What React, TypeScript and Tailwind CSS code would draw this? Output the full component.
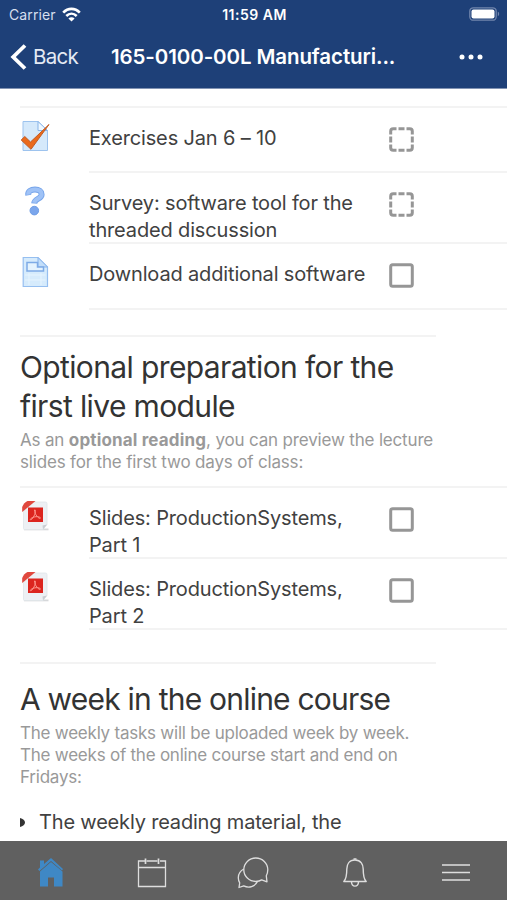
import type { ReactNode } from 'react';

function CheckedPageIcon() {
    return (
        <svg width="30" height="32" viewBox="0 0 30 32" fill="none">
            <path d="M3 1.5H18L27.5 11V30.5H3Z" fill="#d5e9fb" stroke="#9dc3ee" />
            <path d="M18 1.5V10.5H27.5Z" fill="#eff8ff" stroke="#86b3e8" />
            <path d="M1.2 20L4.8 16.5L10.5 22L29 4.5L11 29.3Z" fill="#ea6a1c" stroke="#c05c25" strokeWidth="1" strokeLinejoin="round" />
        </svg>
    );
}

function QuestionIcon() {
    return (
        <svg width="30" height="32" viewBox="0 0 30 32" fill="none">
            <path d="M8.3 10.2C7.6 6.2 11 4.5 15 4.5C19.2 4.5 21.6 6.4 21.6 9.4C21.6 14 14.6 13.4 14.2 18.4" stroke="#76a4ea" strokeWidth="6" />
            <path d="M8.4 9.6C7.9 6.2 11 4.5 15 4.5C19.2 4.5 21.6 6.4 21.6 9.4C21.6 14 14.6 13.4 14.2 17.8" stroke="#9fc2f6" strokeWidth="4.2" />
            <circle cx="14.3" cy="25.6" r="4.3" fill="#7ba6ec" stroke="#6f9de6" />
        </svg>
    );
}

function PageIcon() {
    return (
        <svg width="30" height="32" viewBox="0 0 30 32" fill="none">
            <path d="M3.2 1.5H18L27.5 11V30.5H3.2Z" fill="#d6ebfc" stroke="#96bff0" strokeWidth="1.2" />
            <path d="M5 19H25.5M5 24H25.5M9 17V29M21 17V29" stroke="#e6f4fe" />
            <path d="M18 1.5V11H27.5Z" fill="#c2defa" stroke="#8ab5ec" />
            <path d="M7 6.5H17.5V11H23.5V15H7Z" fill="#e4f3fe" stroke="#7dabe6" strokeWidth="1.5" />
        </svg>
    );
}

function PdfIcon() {
    return (
        <svg width="30" height="32" viewBox="0 0 30 32" fill="none">
            <path d="M4 28.5H28.5V30.3H4Z" fill="#d6d8da" />
            <path d="M13 2H25.5Q27 2 27 3.5V24.5L23 29.5H4.5Q3.5 29.5 3.5 28.5V11Z" fill="#edf0f4" stroke="#e0e4e9" strokeWidth=".8" />
            <path d="M27 24.5L22.5 25.5L23 29.5Z" fill="#c9cdd2" />
            <path d="M7.5 1H15.5L2.2 12V7Q4 2.5 7.5 1Z" fill="#e0483e" />
            <rect x="8" y="7.5" width="15" height="14.5" fill="#dc251f" />
            <path d="M14.5 10C16.2 9 15.5 13.5 14 16C12.5 19 10.5 20.5 10.3 19.5C10.2 18.5 13 17 16 16.7C19 16.5 21 17.5 20.3 18.3C19 19.2 14.5 14.5 14.5 10Z" stroke="#ff9f95" strokeWidth=".9" />
        </svg>
    );
}

function Checkbox({ dashed = false }: { dashed?: boolean }) {
    return (
        <svg width="25" height="25" viewBox="0 0 25 25" fill="none" stroke="#969696" strokeWidth="3">
            {dashed ? (
                <>
                    <path d="M1.7 7.5V4.2Q1.7 1.7 4.2 1.7H7.5M17.5 1.7H20.8Q23.3 1.7 23.3 4.2V7.5M23.3 17.5V20.8Q23.3 23.3 20.8 23.3H17.5M7.5 23.3H4.2Q1.7 23.3 1.7 20.8V17.5" />
                    <path d="M9.5 1.7H15.5M9.5 23.3H15.5M1.7 9.5V15.5M23.3 9.5V15.5" />
                </>
            ) : (
                <rect x="1.7" y="1.7" width="21.6" height="21.6" rx="2" />
            )}
        </svg>
    );
}

type RowProps = {
    icon: ReactNode;
    height: string;
    dashed?: boolean;
    children: ReactNode;
};

function Row({ icon, height, dashed, children }: RowProps) {
    return (
        <div className={`flex pl-[20px] ${height}`}>
            <div className="w-[69px] shrink-0 pt-[12px]">{icon}</div>
            <div className="flex grow border-b-2 border-[#f3f3f3]">
                <div className="w-[300px] shrink-0 whitespace-nowrap pt-[17px] text-[20px] leading-[27px] tracking-[-0.15px] text-[#414141]">
                    {children}
                </div>
                <div className="pt-[19px]">
                    <Checkbox dashed={dashed} />
                </div>
            </div>
        </div>
    );
}

function StatusBar() {
    return (
        <div className="grid h-[28px] grid-cols-3 items-center pl-[9px] pr-[7px]">
            <div className="flex items-center gap-[6px]">
                <span className="text-[14px] tracking-[0.1px] text-[#d6dfef]">Carrier</span>
                <svg width="19" height="15" viewBox="0 0 19 15" fill="none" stroke="#fff" strokeWidth="2.6">
                    <path d="M1.2 5.6C6 .6 13 .6 17.8 5.6" />
                    <path d="M4.3 9C7.4 6 11.6 6 14.7 9" />
                    <path d="M9.5 14.5L6.4 11.4C8.2 9.8 10.8 9.8 12.6 11.4Z" fill="#fff" stroke="none" />
                </svg>
            </div>
            <span className="whitespace-nowrap text-center text-[14px] font-semibold tracking-[0.5px]">11:59 AM</span>
            <svg className="justify-self-end" width="31" height="14" viewBox="0 0 31 14" fill="none">
                <rect x=".8" y=".8" width="26.4" height="12.4" rx="3.5" stroke="#7185ac" strokeWidth="1.3" />
                <rect x="2.5" y="2.5" width="23" height="9" rx="2" fill="#fff" />
                <path d="M28.8 4.8C30.6 5.4 30.6 8.6 28.8 9.2Z" fill="#7185ac" />
            </svg>
        </div>
    );
}

function TabBar() {
    return (
        <nav className="grid h-[59px] shrink-0 grid-cols-5 items-center justify-items-center bg-[#606060] pt-[4px]">
            <svg width="28" height="32" viewBox="0 0 28 32" fill="none">
                <path d="M3 3.5H7V7L14 1L26 12L25 13.5L14 4L2.5 14L1 12.5L3 10.5Z" fill="#3f88c5" />
                <path d="M3 14.5L14 5L25.5 14.5V29.5H17V20.5H11V29.5H3Z" fill="#3f88c5" />
            </svg>
            <svg width="30" height="32" viewBox="0 0 30 32" fill="none" stroke="#dedede" strokeWidth="1.3">
                <path d="M8 4H1.5V29.5H28.5V4H23M9.5 4H20.5M1.5 10.5H28.5" />
                <path d="M8.5 1.5V7M21.5 1.5V7" strokeWidth="1.7" />
            </svg>
            <svg width="32" height="32" viewBox="0 0 32 32" fill="none" stroke="#dedede" strokeWidth="1.3" strokeLinejoin="round">
                <path d="M29.3 18.8C30.2 17 30.8 15 30.8 12.8C30.8 6.3 25.4 1 18.8 1S6.8 6.3 6.8 12.8S12.2 24.5 18.8 24.5C21 24.5 23 24 24.7 22.9L30 24.8Z" />
                <path d="M6.8 12C3.5 13.7 1.3 17 1.3 20.8C1.3 22.6 1.8 24.3 2.7 25.8L2 30.5L6.7 28.8C12 31.5 18 29.5 20.5 24.4" />
            </svg>
            <svg width="26" height="32" viewBox="0 0 26 32" fill="none" stroke="#dedede" strokeWidth="1.4">
                <path d="M13 3C7 3 4.8 7.5 4.8 12C4.8 19 4.3 22 1.8 24.5H24.2C21.7 22 21.2 19 21.2 12C21.2 7.5 19 3 13 3Z" strokeLinejoin="round" />
                <path d="M9.5 25C9.8 30.5 16.2 30.5 16.5 25M11.5 2H14.5" />
            </svg>
            <svg width="28" height="32" viewBox="0 0 28 32" fill="none" stroke="#dedede" strokeWidth="1.5">
                <path d="M0 8H28M0 15.5H28M0 23H28" />
            </svg>
        </nav>
    );
}

export default function App() {
    return (
        <div className="flex h-[900px] w-[507px] flex-col overflow-hidden bg-white font-[Inter,'Liberation_Sans',sans-serif]">
            <header className="h-[89px] shrink-0 border-b border-[#8293b3] bg-[#1e4078] text-white">
                <StatusBar />
                <div className="flex h-[58px] items-center pl-[10px] pr-[24px]">
                    <svg width="17" height="26" viewBox="0 0 17 26" fill="none" stroke="#fff" strokeWidth="3.8">
                        <path d="M15 1.5L3.2 13L15 24.5" />
                    </svg>
                    <span className="ml-[6px] w-[78px] text-[20.5px] tracking-[-0.7px] text-[#e4eaf4]">Back</span>
                    <h1 className="grow whitespace-nowrap text-[20.5px] font-semibold tracking-[-0.1px]">165-0100-00L Manufacturi...</h1>
                    <svg width="24" height="6" viewBox="0 0 24 6" fill="#fff">
                        <circle cx="3" cy="3" r="2.5" />
                        <circle cx="12" cy="3" r="2.5" />
                        <circle cx="21" cy="3" r="2.5" />
                    </svg>
                </div>
            </header>

            <main className="grow overflow-hidden pt-[17px]">
                <div className="ml-[20px] h-[2px] bg-[#f3f3f3]" />
                <Row icon={<CheckedPageIcon />} height="h-[65px]" dashed>
                    Exercises Jan 6 – 10
                </Row>
                <Row icon={<QuestionIcon />} height="h-[71px]" dashed>
                    Survey: software tool for the
                    <br />
                    threaded discussion
                </Row>
                <Row icon={<PageIcon />} height="h-[66px]">
                    Download additional software
                </Row>

                <section className="ml-[20px] mt-[25px] w-[416px] whitespace-nowrap border-t-2 border-[#f3f3f3] pt-[11px]">
                    <h2 className="text-[30px] leading-[39px] tracking-[-0.63px] text-[#333]">
                        Optional preparation for the
                        <br />
                        first live module
                    </h2>
                    <p className="mt-[3px] text-[17px] leading-[22px] tracking-[-0.17px] text-[#999]">
                        As an <b className="font-bold tracking-[0.15px]">optional reading</b>, you can preview the lecture
                        <br />
                        slides for the first two days of class:
                    </p>
                </section>

                <div className="ml-[20px] mt-[13px] h-[2px] bg-[#f3f3f3]" />
                <Row icon={<PdfIcon />} height="h-[71px]">
                    Slides: ProductionSystems,
                    <br />
                    Part 1
                </Row>
                <Row icon={<PdfIcon />} height="h-[71px]">
                    Slides: ProductionSystems,
                    <br />
                    Part 2
                </Row>

                <section className="ml-[20px] mt-[32px] w-[416px] whitespace-nowrap border-t-2 border-[#f3f3f3] pt-[16px]">
                    <h2 className="text-[30px] leading-[39px] tracking-[-0.78px] text-[#333]">A week in the online course</h2>
                    <p className="mt-[3px] text-[17px] leading-[22px] tracking-[-0.23px] text-[#999]">
                        The weekly tasks will be uploaded week by week.
                        <br />
                        The weeks of the online course start and end on
                        <br />
                        Fridays:
                    </p>
                    <div className="mt-[21px] flex items-center text-[20px] leading-[27px] tracking-[-0.18px] text-[#414141]">
                        <svg className="mr-[14px]" width="5" height="9" viewBox="0 0 5 9">
                            <path d="M0 0C3 .5 5 2.5 5 4.5S3 8.5 0 9Z" fill="#333" />
                        </svg>
                        The weekly reading material, the
                    </div>
                </section>
            </main>

            <TabBar />
        </div>
    );
}
